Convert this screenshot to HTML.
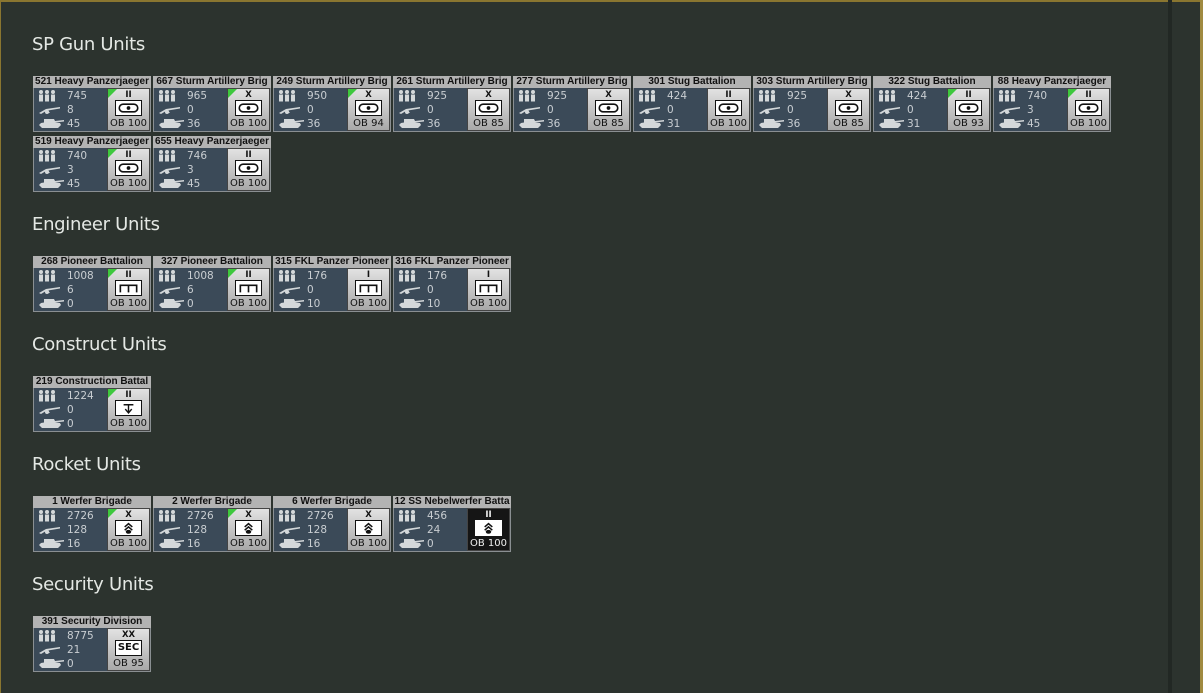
<!DOCTYPE html>
<html><head><meta charset="utf-8"><style>
body{margin:0;width:1203px;height:693px;overflow:hidden;background:#2c332e;font-family:"DejaVu Sans","Liberation Sans",sans-serif;position:relative}
.fr{position:absolute;left:0;top:0;width:1203px;height:693px;box-sizing:border-box;border-top:2px solid #8a7630;border-left:1px solid #8a7630}
.rb{position:absolute;left:1168px;top:0;width:4px;height:693px;background:#222824}
.rb2{position:absolute;left:1200px;top:0;width:3px;height:693px;background:#a08a40}
h2{position:absolute;left:32px;margin:0;font:18px "DejaVu Sans","Liberation Sans",sans-serif;color:#e4e8e4;font-weight:normal;letter-spacing:-0.3px}
.c{position:absolute;width:118px;height:57px}
.t{height:12px;background:#b3b3b3;color:#111;font:bold 10px "Liberation Sans",sans-serif;line-height:12px;text-align:center;white-space:nowrap;overflow:hidden}
.b{position:absolute;left:0;top:12px;width:116px;height:43px;background:#3b4a58;border:1px solid #8a8f92;border-top:none}
.b svg.ic{position:absolute;left:4px;fill:#d4d8da}
.n{position:absolute;left:33px;color:#c9ced2;font-size:10.5px;line-height:12px}
.r{position:absolute;left:73px;top:0;width:43px;height:43px;background:linear-gradient(#e2e2e2,#a8a8a8);border:1px solid #444;box-sizing:border-box;text-align:center;color:#111}
.r.dk{background:#151515;color:#eee}
.tri{position:absolute;left:0;top:0;width:0;height:0;border-top:9px solid #3ec83e;border-right:9px solid transparent}
.sz{font-size:8.5px;font-weight:bold;line-height:10px;height:11px;padding-top:1px;box-sizing:border-box}
.sym{display:block;margin:0 auto;width:27px;height:16px;background:#fff;border:1px solid #111;box-sizing:border-box;position:relative}
.dk .sym{border-color:#fff}
.ob{position:absolute;bottom:0;left:0;width:100%;font-size:10px;line-height:12px}
</style></head><body>
<svg width="0" height="0" style="position:absolute"><defs>
<g id="p"><circle cx="3" cy="2" r="2"/><rect x="1" y="4.5" width="4" height="7"/><circle cx="9" cy="2" r="2"/><rect x="7" y="4.5" width="4" height="7"/><circle cx="15" cy="2" r="2"/><rect x="13" y="4.5" width="4" height="7"/></g>
<g id="g"><path d="M1 9 L8 5 L22 3 L22 4.5 L10 6.5 L12 9 L10 9 L8 7 L3 10 Z"/><circle cx="9" cy="8" r="2"/></g>
<g id="k"><path d="M6 2 L16 2 L17 4 L26 3 L26 4.5 L17 5.5 L22 6 L23 8 L20 11 L4 11 L1 8 L3 6 L6 5.5 Z"/></g>
<g id="ov"><rect x="3" y="2.5" width="17" height="7" rx="3.5" fill="none" stroke="#111" stroke-width="1.5"/><circle cx="11.5" cy="6" r="1.7" fill="#111"/></g>
<g id="en"><path d="M4 10 V3.5 H19 V10 M11.5 3.5 V10" fill="none" stroke="#111" stroke-width="1.5"/></g>
<g id="co"><path d="M7 3 H16 M11.5 3 V10 M8.5 7 L11.5 10.5 L14.5 7" fill="none" stroke="#111" stroke-width="1.3"/></g>
<g id="ro"><path d="M8 5 L11.5 2 L15 5 M8 8 L11.5 5 L15 8" fill="none" stroke="#111" stroke-width="1.4"/><ellipse cx="11.5" cy="9.5" rx="2.5" ry="1.8" fill="#111"/></g>
</defs></svg>
<div class="fr"></div><div class="rb"></div><div class="rb2"></div>

<h2 style="top:34px">SP Gun Units</h2>
<h2 style="top:214px">Engineer Units</h2>
<h2 style="top:334px">Construct Units</h2>
<h2 style="top:454px">Rocket Units</h2>
<h2 style="top:574px">Security Units</h2>

<div class="c" style="left:33px;top:76px"><div class="t">521 Heavy Panzerjaeger</div><div class="b"><svg class="ic" style="top:2px" width="18" height="12"><use href="#p"/></svg><svg class="ic" style="top:16px" width="24" height="11"><use href="#g"/></svg><svg class="ic" style="top:29px" width="27" height="12"><use href="#k"/></svg><span class="n" style="top:2px">745</span><span class="n" style="top:16px">8</span><span class="n" style="top:30px">45</span><div class="r"><s class="tri"></s><div class="sz">II</div><svg class="sym" width="27" height="16" viewBox="0 0 23 12"><use href="#ov"/></svg><div class="ob">OB 100</div></div></div></div>
<div class="c" style="left:153px;top:76px"><div class="t">667 Sturm Artillery Brig</div><div class="b"><svg class="ic" style="top:2px" width="18" height="12"><use href="#p"/></svg><svg class="ic" style="top:16px" width="24" height="11"><use href="#g"/></svg><svg class="ic" style="top:29px" width="27" height="12"><use href="#k"/></svg><span class="n" style="top:2px">965</span><span class="n" style="top:16px">0</span><span class="n" style="top:30px">36</span><div class="r"><s class="tri"></s><div class="sz">X</div><svg class="sym" width="27" height="16" viewBox="0 0 23 12"><use href="#ov"/></svg><div class="ob">OB 100</div></div></div></div>
<div class="c" style="left:273px;top:76px"><div class="t">249 Sturm Artillery Brig</div><div class="b"><svg class="ic" style="top:2px" width="18" height="12"><use href="#p"/></svg><svg class="ic" style="top:16px" width="24" height="11"><use href="#g"/></svg><svg class="ic" style="top:29px" width="27" height="12"><use href="#k"/></svg><span class="n" style="top:2px">950</span><span class="n" style="top:16px">0</span><span class="n" style="top:30px">36</span><div class="r"><s class="tri"></s><div class="sz">X</div><svg class="sym" width="27" height="16" viewBox="0 0 23 12"><use href="#ov"/></svg><div class="ob">OB 94</div></div></div></div>
<div class="c" style="left:393px;top:76px"><div class="t">261 Sturm Artillery Brig</div><div class="b"><svg class="ic" style="top:2px" width="18" height="12"><use href="#p"/></svg><svg class="ic" style="top:16px" width="24" height="11"><use href="#g"/></svg><svg class="ic" style="top:29px" width="27" height="12"><use href="#k"/></svg><span class="n" style="top:2px">925</span><span class="n" style="top:16px">0</span><span class="n" style="top:30px">36</span><div class="r"><div class="sz">X</div><svg class="sym" width="27" height="16" viewBox="0 0 23 12"><use href="#ov"/></svg><div class="ob">OB 85</div></div></div></div>
<div class="c" style="left:513px;top:76px"><div class="t">277 Sturm Artillery Brig</div><div class="b"><svg class="ic" style="top:2px" width="18" height="12"><use href="#p"/></svg><svg class="ic" style="top:16px" width="24" height="11"><use href="#g"/></svg><svg class="ic" style="top:29px" width="27" height="12"><use href="#k"/></svg><span class="n" style="top:2px">925</span><span class="n" style="top:16px">0</span><span class="n" style="top:30px">36</span><div class="r"><div class="sz">X</div><svg class="sym" width="27" height="16" viewBox="0 0 23 12"><use href="#ov"/></svg><div class="ob">OB 85</div></div></div></div>
<div class="c" style="left:633px;top:76px"><div class="t">301 Stug Battalion</div><div class="b"><svg class="ic" style="top:2px" width="18" height="12"><use href="#p"/></svg><svg class="ic" style="top:16px" width="24" height="11"><use href="#g"/></svg><svg class="ic" style="top:29px" width="27" height="12"><use href="#k"/></svg><span class="n" style="top:2px">424</span><span class="n" style="top:16px">0</span><span class="n" style="top:30px">31</span><div class="r"><div class="sz">II</div><svg class="sym" width="27" height="16" viewBox="0 0 23 12"><use href="#ov"/></svg><div class="ob">OB 100</div></div></div></div>
<div class="c" style="left:753px;top:76px"><div class="t">303 Sturm Artillery Brig</div><div class="b"><svg class="ic" style="top:2px" width="18" height="12"><use href="#p"/></svg><svg class="ic" style="top:16px" width="24" height="11"><use href="#g"/></svg><svg class="ic" style="top:29px" width="27" height="12"><use href="#k"/></svg><span class="n" style="top:2px">925</span><span class="n" style="top:16px">0</span><span class="n" style="top:30px">36</span><div class="r"><div class="sz">X</div><svg class="sym" width="27" height="16" viewBox="0 0 23 12"><use href="#ov"/></svg><div class="ob">OB 85</div></div></div></div>
<div class="c" style="left:873px;top:76px"><div class="t">322 Stug Battalion</div><div class="b"><svg class="ic" style="top:2px" width="18" height="12"><use href="#p"/></svg><svg class="ic" style="top:16px" width="24" height="11"><use href="#g"/></svg><svg class="ic" style="top:29px" width="27" height="12"><use href="#k"/></svg><span class="n" style="top:2px">424</span><span class="n" style="top:16px">0</span><span class="n" style="top:30px">31</span><div class="r"><s class="tri"></s><div class="sz">II</div><svg class="sym" width="27" height="16" viewBox="0 0 23 12"><use href="#ov"/></svg><div class="ob">OB 93</div></div></div></div>
<div class="c" style="left:993px;top:76px"><div class="t">88 Heavy Panzerjaeger</div><div class="b"><svg class="ic" style="top:2px" width="18" height="12"><use href="#p"/></svg><svg class="ic" style="top:16px" width="24" height="11"><use href="#g"/></svg><svg class="ic" style="top:29px" width="27" height="12"><use href="#k"/></svg><span class="n" style="top:2px">740</span><span class="n" style="top:16px">3</span><span class="n" style="top:30px">45</span><div class="r"><s class="tri"></s><div class="sz">II</div><svg class="sym" width="27" height="16" viewBox="0 0 23 12"><use href="#ov"/></svg><div class="ob">OB 100</div></div></div></div>

<div class="c" style="left:33px;top:136px"><div class="t">519 Heavy Panzerjaeger</div><div class="b"><svg class="ic" style="top:2px" width="18" height="12"><use href="#p"/></svg><svg class="ic" style="top:16px" width="24" height="11"><use href="#g"/></svg><svg class="ic" style="top:29px" width="27" height="12"><use href="#k"/></svg><span class="n" style="top:2px">740</span><span class="n" style="top:16px">3</span><span class="n" style="top:30px">45</span><div class="r"><s class="tri"></s><div class="sz">II</div><svg class="sym" width="27" height="16" viewBox="0 0 23 12"><use href="#ov"/></svg><div class="ob">OB 100</div></div></div></div>
<div class="c" style="left:153px;top:136px"><div class="t">655 Heavy Panzerjaeger</div><div class="b"><svg class="ic" style="top:2px" width="18" height="12"><use href="#p"/></svg><svg class="ic" style="top:16px" width="24" height="11"><use href="#g"/></svg><svg class="ic" style="top:29px" width="27" height="12"><use href="#k"/></svg><span class="n" style="top:2px">746</span><span class="n" style="top:16px">3</span><span class="n" style="top:30px">45</span><div class="r"><div class="sz">II</div><svg class="sym" width="27" height="16" viewBox="0 0 23 12"><use href="#ov"/></svg><div class="ob">OB 100</div></div></div></div>

<div class="c" style="left:33px;top:256px"><div class="t">268 Pioneer Battalion</div><div class="b"><svg class="ic" style="top:2px" width="18" height="12"><use href="#p"/></svg><svg class="ic" style="top:16px" width="24" height="11"><use href="#g"/></svg><svg class="ic" style="top:29px" width="27" height="12"><use href="#k"/></svg><span class="n" style="top:2px">1008</span><span class="n" style="top:16px">6</span><span class="n" style="top:30px">0</span><div class="r"><s class="tri"></s><div class="sz">II</div><svg class="sym" width="27" height="16" viewBox="0 0 23 12"><use href="#en"/></svg><div class="ob">OB 100</div></div></div></div>
<div class="c" style="left:153px;top:256px"><div class="t">327 Pioneer Battalion</div><div class="b"><svg class="ic" style="top:2px" width="18" height="12"><use href="#p"/></svg><svg class="ic" style="top:16px" width="24" height="11"><use href="#g"/></svg><svg class="ic" style="top:29px" width="27" height="12"><use href="#k"/></svg><span class="n" style="top:2px">1008</span><span class="n" style="top:16px">6</span><span class="n" style="top:30px">0</span><div class="r"><s class="tri"></s><div class="sz">II</div><svg class="sym" width="27" height="16" viewBox="0 0 23 12"><use href="#en"/></svg><div class="ob">OB 100</div></div></div></div>
<div class="c" style="left:273px;top:256px"><div class="t">315 FKL Panzer Pioneer</div><div class="b"><svg class="ic" style="top:2px" width="18" height="12"><use href="#p"/></svg><svg class="ic" style="top:16px" width="24" height="11"><use href="#g"/></svg><svg class="ic" style="top:29px" width="27" height="12"><use href="#k"/></svg><span class="n" style="top:2px">176</span><span class="n" style="top:16px">0</span><span class="n" style="top:30px">10</span><div class="r"><div class="sz">I</div><svg class="sym" width="27" height="16" viewBox="0 0 23 12"><use href="#en"/></svg><div class="ob">OB 100</div></div></div></div>
<div class="c" style="left:393px;top:256px"><div class="t">316 FKL Panzer Pioneer</div><div class="b"><svg class="ic" style="top:2px" width="18" height="12"><use href="#p"/></svg><svg class="ic" style="top:16px" width="24" height="11"><use href="#g"/></svg><svg class="ic" style="top:29px" width="27" height="12"><use href="#k"/></svg><span class="n" style="top:2px">176</span><span class="n" style="top:16px">0</span><span class="n" style="top:30px">10</span><div class="r"><div class="sz">I</div><svg class="sym" width="27" height="16" viewBox="0 0 23 12"><use href="#en"/></svg><div class="ob">OB 100</div></div></div></div>

<div class="c" style="left:33px;top:376px"><div class="t">219 Construction Battal</div><div class="b"><svg class="ic" style="top:2px" width="18" height="12"><use href="#p"/></svg><svg class="ic" style="top:16px" width="24" height="11"><use href="#g"/></svg><svg class="ic" style="top:29px" width="27" height="12"><use href="#k"/></svg><span class="n" style="top:2px">1224</span><span class="n" style="top:16px">0</span><span class="n" style="top:30px">0</span><div class="r"><s class="tri"></s><div class="sz">II</div><svg class="sym" width="27" height="16" viewBox="0 0 23 12"><use href="#co"/></svg><div class="ob">OB 100</div></div></div></div>

<div class="c" style="left:33px;top:496px"><div class="t">1 Werfer Brigade</div><div class="b"><svg class="ic" style="top:2px" width="18" height="12"><use href="#p"/></svg><svg class="ic" style="top:16px" width="24" height="11"><use href="#g"/></svg><svg class="ic" style="top:29px" width="27" height="12"><use href="#k"/></svg><span class="n" style="top:2px">2726</span><span class="n" style="top:16px">128</span><span class="n" style="top:30px">16</span><div class="r"><s class="tri"></s><div class="sz">X</div><svg class="sym" width="27" height="16" viewBox="0 0 23 12"><use href="#ro"/></svg><div class="ob">OB 100</div></div></div></div>
<div class="c" style="left:153px;top:496px"><div class="t">2 Werfer Brigade</div><div class="b"><svg class="ic" style="top:2px" width="18" height="12"><use href="#p"/></svg><svg class="ic" style="top:16px" width="24" height="11"><use href="#g"/></svg><svg class="ic" style="top:29px" width="27" height="12"><use href="#k"/></svg><span class="n" style="top:2px">2726</span><span class="n" style="top:16px">128</span><span class="n" style="top:30px">16</span><div class="r"><s class="tri"></s><div class="sz">X</div><svg class="sym" width="27" height="16" viewBox="0 0 23 12"><use href="#ro"/></svg><div class="ob">OB 100</div></div></div></div>
<div class="c" style="left:273px;top:496px"><div class="t">6 Werfer Brigade</div><div class="b"><svg class="ic" style="top:2px" width="18" height="12"><use href="#p"/></svg><svg class="ic" style="top:16px" width="24" height="11"><use href="#g"/></svg><svg class="ic" style="top:29px" width="27" height="12"><use href="#k"/></svg><span class="n" style="top:2px">2726</span><span class="n" style="top:16px">128</span><span class="n" style="top:30px">16</span><div class="r"><div class="sz">X</div><svg class="sym" width="27" height="16" viewBox="0 0 23 12"><use href="#ro"/></svg><div class="ob">OB 100</div></div></div></div>
<div class="c" style="left:393px;top:496px"><div class="t">12 SS Nebelwerfer Batta</div><div class="b"><svg class="ic" style="top:2px" width="18" height="12"><use href="#p"/></svg><svg class="ic" style="top:16px" width="24" height="11"><use href="#g"/></svg><svg class="ic" style="top:29px" width="27" height="12"><use href="#k"/></svg><span class="n" style="top:2px">456</span><span class="n" style="top:16px">24</span><span class="n" style="top:30px">0</span><div class="r dk"><div class="sz">II</div><svg class="sym" width="27" height="16" viewBox="0 0 23 12"><use href="#ro"/></svg><div class="ob">OB 100</div></div></div></div>

<div class="c" style="left:33px;top:616px"><div class="t">391 Security Division</div><div class="b"><svg class="ic" style="top:2px" width="18" height="12"><use href="#p"/></svg><svg class="ic" style="top:16px" width="24" height="11"><use href="#g"/></svg><svg class="ic" style="top:29px" width="27" height="12"><use href="#k"/></svg><span class="n" style="top:2px">8775</span><span class="n" style="top:16px">21</span><span class="n" style="top:30px">0</span><div class="r"><div class="sz">XX</div><div class="sym" style="font-size:10px;line-height:14px;font-weight:bold">SEC</div><div class="ob">OB 95</div></div></div></div>
</body></html>
